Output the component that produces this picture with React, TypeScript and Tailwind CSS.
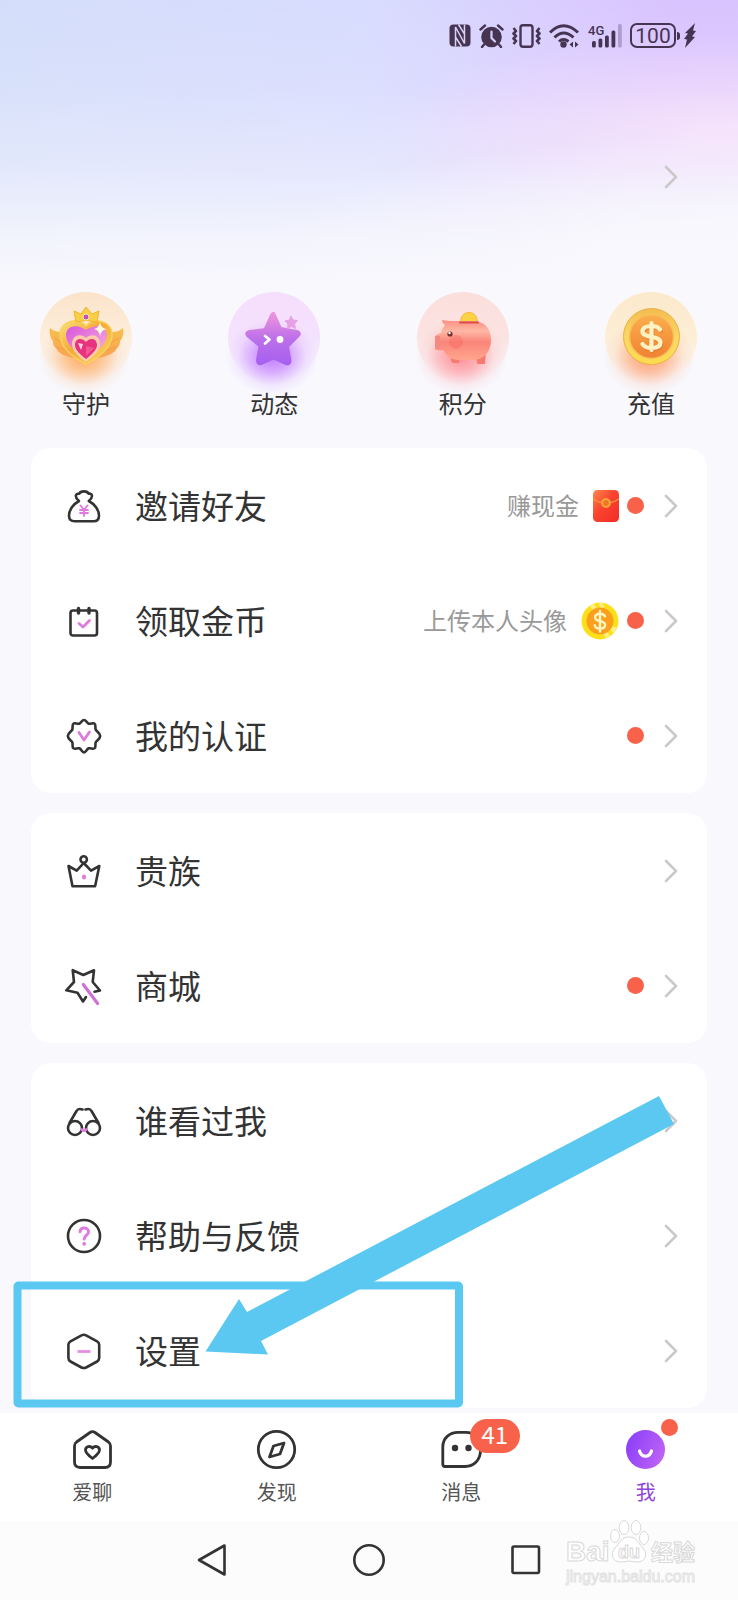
import type { ReactNode } from "react";

const DARK = "#333333";
const PINK = "#df7be0";

function Chevron() {
  return (
    <svg className="h-6 w-3.5 shrink-0" viewBox="0 0 14 24" fill="none" stroke="#c9c9cc" strokeWidth={2.6} strokeLinecap="round" strokeLinejoin="round">
      <path d="M2 2 12 12 2 22" />
    </svg>
  );
}

function LineIcon({ children }: { children: ReactNode }) {
  return (
    <svg className="h-[34px] w-[34px] shrink-0 overflow-visible" viewBox="0 0 34 34" fill="none" stroke={DARK} strokeWidth={2.6} strokeLinecap="round" strokeLinejoin="round">
      {children}
    </svg>
  );
}

const icons = {
  bag: (
    <LineIcon>
      <path d="M12 12C9.5 10 8.5 8 9 6.2c.5-1.6 2.2-1.6 3.2-1.4C12.8 3.3 15 2.4 17 2.4s4 .9 4.6 2.4c1-.2 2.9-.2 3.3 1.4.4 1.8-.6 3.8-3.1 5.800C27.500 15 32 21 32 26.5c0 4-2 5.800-5.500 5.800h-19C4 32.300 2 30.500 2 26.500 2 21 6.500 15 12 12z" />
      <path stroke={PINK} strokeWidth={1.9} d="m13.5 16.5 3.5 4.5 3.5-4.5M13 21h8M13 24h8M17 21v6" />
    </LineIcon>
  ),
  calendar: (
    <LineIcon>
      <rect x="3.5" y="6.5" width="26.5" height="25" rx="2.5" />
      <path strokeWidth={3.4} d="M11.5 4.5V9M22 4.5V9" />
      <path stroke={PINK} strokeWidth={2.8} d="m12 19.5 4 3.5 6.5-6.5" />
    </LineIcon>
  ),
  badge: (
    <LineIcon>
      <path d="M17 1c1.800 0 3 3 4.600 3.700S26.500 3.500 27.700 4.800c1.300 1.300.3 4.200 1 5.900C29.500 12.300 33.200 14 33.200 17s-3.700 4.700-4.500 6.300c-.7 1.700.3 4.600-1 5.900-1.200 1.300-4.500-.6-6.100.1S18.800 33.500 17 33.500s-3-3.500-4.600-4.200-4.900 1.200-6.100-.1c-1.300-1.300-.3-4.200-1-5.900C4.500 21.700.8 20 .8 17s3.700-4.700 4.500-6.300c.7-1.700-.3-4.600 1-5.900 1.200-1.300 4.500.6 6.100-.1S15.200 1 17 1z" />
      <path stroke={PINK} strokeWidth={2.8} d="m12 13.5 5 7.5 5.5-8" />
    </LineIcon>
  ),
  crown: (
    <LineIcon>
      <path d="m1.5 12 8.2 4.7L16.700 9 24 16.700l8.300-4.700-4.200 20.300H5.500z" />
      <circle cx="16.700" cy="5.500" r="3.200" fill="#fff" />
      <path stroke={PINK} strokeWidth={4} d="M17 22.500v1" />
    </LineIcon>
  ),
  wand: (
    <LineIcon>
      <path d="M27.500 22.700 33 21.500 25.700 13 27 1.200 16.300 6 5.700 1.200 7 13-.7 21.300l11.200 2.400L16 32.500l3-4.500" />
      <path stroke="#cf70d6" strokeWidth={3.2} d="m16.300 15.500 14.300 19" />
    </LineIcon>
  ),
  binoculars: (
    <LineIcon>
      <circle cx="8" cy="24" r="7" />
      <circle cx="26" cy="24" r="7" />
      <path d="M2.500 19 9.500 7c1-2 3-2.500 6-1.500M31.500 19 24.500 7c-1-2-3-2.500-6-1.500" />
      <path stroke={PINK} strokeWidth={2.8} d="M14.500 25.500q2.500 2 5 0" />
    </LineIcon>
  ),
  help: (
    <LineIcon>
      <circle cx="17" cy="17" r="16" />
      <path stroke={PINK} strokeWidth={3} d="M13 12.700c.3-2.300 2-3.700 4.200-3.700 2.300 0 4.300 1.500 4.300 3.900 0 3.600-4.300 3.200-4.300 7.100" />
      <circle cx="17.200" cy="24.800" r="1.900" fill={PINK} stroke="none" />
    </LineIcon>
  ),
  settings: (
    <LineIcon>
      <path d="M14.500 1.300q2.300-1.100 4.600 0l11 6q2.100 1.200 2.100 3.500v13q0 2.500-2.100 3.700l-11 6q-2.300 1.100-4.600 0l-11-6q-2.100-1.200-2.100-3.700v-13q0-2.300 2.100-3.500z" />
      <path stroke="#e58be0" strokeWidth={2.7} strokeLinecap="butt" d="M10.500 17.500h13" />
    </LineIcon>
  ),
};

function RedPacket() {
  return (
    <svg className="h-8 w-[26px] shrink-0" viewBox="0 0 26 32">
      <defs>
        <linearGradient id="packet" x1="0" y1="0" x2="1" y2="1">
          <stop offset="0" stopColor="#fb8a4e" />
          <stop offset=".45" stopColor="#f9432f" />
          <stop offset="1" stopColor="#f32c26" />
        </linearGradient>
      </defs>
      <rect width="26" height="32" rx="4.5" fill="url(#packet)" />
      <path d="M.5 9C5 12.500 9 13 13 13s8-.5 12.500-4" fill="none" stroke="#fa9a3c" strokeWidth="1.3" />
      <circle cx="13" cy="13" r="5" fill="#f9a03a" />
      <circle cx="13" cy="13" r="2.2" fill="#f57a28" stroke="#d9661a" strokeWidth=".8" />
    </svg>
  );
}

function GoldCoin() {
  return (
    <svg className="h-[38px] w-[38px] shrink-0" viewBox="0 0 38 38">
      <circle cx="19" cy="19" r="18.5" fill="#fde01a" />
      <path d="M9 3.500 13 2l3 5-4 2zM18 .6l4 .2 1 5-4 .3zM29 34l-4 2-3-5 4-2zM33 31l3-5-5-2-2 4z" fill="#fff3a0" opacity=".8" />
      <circle cx="19" cy="19" r="13.5" fill="#fba01c" />
      <path d="M24 14.500c-.8-2-2.600-2.800-5-2.800-2.800 0-4.900 1.300-4.900 3.700 0 5 10 2.300 10 7.400 0 2.500-2.200 3.800-5.100 3.800-2.700 0-4.800-1.100-5.300-3.300M19 9v20.500" fill="none" stroke="#fff7c4" strokeWidth="2.4" strokeLinecap="round" />
    </svg>
  );
}

const STAR = "M46 22 52.500 36.500 69 39.500Q73 41 70 44L59.500 54.500 62 68.500Q62 73 57.500 71.500L45.500 66 33.500 71.500Q29.500 72.500 29.500 68L32 54 19.500 43.500Q17.500 40.500 21.500 39.500L37 37.500 43 24Q45 20 46 22Z";
const DOLLAR = "M55 37.500c-2-3-5-3.500-8.500-3.500-5 0-9 2-9 5.500 0 7 18 3.500 18 11 0 4-4 5.500-9 5.500-4.500 0-7.500-1.500-9-4M46.500 31v27";

const quickLinks = [
  {
    label: "守护",
    top: "#fbe3c9",
    mid: "#fdeedd",
    glow: "#ffab5e",
    art: (
      <>
        <defs>
          <linearGradient id="gold" x1="0" y1="0" x2="1" y2="1">
            <stop offset="0" stopColor="#fbe27c" />
            <stop offset=".45" stopColor="#f5a938" />
            <stop offset="1" stopColor="#fbdc64" />
          </linearGradient>
          <linearGradient id="wing" x1="0" y1="0" x2="0" y2="1">
            <stop offset="0" stopColor="#f6c04f" />
            <stop offset="1" stopColor="#f8a252" />
          </linearGradient>
          <linearGradient id="rose" x1="0" y1="0" x2="1" y2="1">
            <stop offset="0" stopColor="#d854dc" />
            <stop offset="1" stopColor="#fbb4dc" />
          </linearGradient>
        </defs>
        <path d="M10 36C16 41 20 39 26 42L34 66C24 64 18 61 16 56 13 54 13 50 13 49 10 46 9 40 10 36ZM83 36C77 41 73 39 67 42L58 66C68 64 75 61 77 56 80 54 80 50 80 49 83 46 84 40 83 36Z" fill="url(#wing)" />
        <path d="M14 46l12 7M17 55l11 4M79 46l-12 7M76 55l-11 4" stroke="#f0933a" opacity=".6" />
        <path d="M46 72C34 66 20 57 20 42 20 30 37 24 46 34 55 24 72 30 72 42 72 57 58 66 46 72Z" fill="url(#gold)" stroke="#f8d25a" strokeWidth="1.5" />
        <path d="M46 65C36 60 26 53 26 43 26 34 37 31 46 38 55 31 67 34 67 43 67 53 56 60 46 65Z" fill="url(#rose)" />
        <path d="M46 70C38 64 32 59 32 52 32 43 41 41 46 46 51 41 60 43 60 52 60 59 54 64 46 70Z" fill="#fbcbab" />
        <path d="M46 67C40 62 35 58 35 53 35 46 42 45 46 50 50 45 57 46 57 53 57 58 52 62 46 67Z" fill="#e8317f" />
        <path d="m38 51 5 1-2 6z" fill="#fff" opacity=".8" />
        <path d="m46 54 8 2-8 8z" fill="#ff7fa6" opacity=".5" />
        <path d="M34 19 41 22 46 15 52 22 59 19 57 30Q46 27 36 30Z" fill="#f8cf45" stroke="#f2b52f" />
        <circle cx="46" cy="25" r="3" fill="#c94bc6" stroke="#fff0a0" />
        <path d="M60 30Q61 37 67 37 61 38 60 44 59 38 54 37 59 36 60 30Z" fill="#fffbe0" />
      </>
    ),
  },
  {
    label: "动态",
    top: "#f6defd",
    mid: "#f3e2fd",
    glow: "#c37cff",
    art: (
      <>
        <defs>
          <linearGradient id="star" x1="0" y1="0" x2="0" y2="1">
            <stop offset="0" stopColor="#ee94dc" />
            <stop offset=".5" stopColor="#bd70ea" />
            <stop offset="1" stopColor="#a660f0" />
          </linearGradient>
        </defs>
        <path d={STAR} fill="url(#star)" stroke="url(#star)" strokeWidth="3" strokeLinejoin="round" />
        <path d="m63 24 2 4 4.500.5-3 3.500 1 4.500-4-2-4 2 .5-4.500-3-3 4.500-1z" fill="#e7a0e6" stroke="#e7a0e6" strokeLinejoin="round" />
        <path d="m37 44 4.500 3.500-4.500 4" fill="none" stroke="#fff" strokeWidth="2.8" strokeLinecap="round" strokeLinejoin="round" />
        <circle cx="52" cy="47.5" r="3.4" fill="#fff" />
      </>
    ),
  },
  {
    label: "积分",
    top: "#fbdfdc",
    mid: "#fbe3e2",
    glow: "#ff8f96",
    art: (
      <>
        <defs>
          <linearGradient id="pig" x1="0" y1="0" x2="0" y2="1">
            <stop offset="0" stopColor="#fb8f82" />
            <stop offset=".28" stopColor="#ffb7a4" />
            <stop offset=".55" stopColor="#fa8579" />
            <stop offset="1" stopColor="#ffa68d" />
          </linearGradient>
        </defs>
        <path d="M33 62h10l-1 9h-6q-2 0-3-9ZM60 62l9-4-1 14h-7q-2 0-1-10Z" fill="#f8796f" />
        <path d="M44 31A8.300 8.300 0 1 1 60 31Z" fill="#fbd245" stroke="#f5b73c" />
        <path d="M25 28q5 1 9 1h22c12 0 18 8 18 19 0 13-8 20-19 20H42c-8 0-12-4-16-10-3 1-8 0-8-1V44q2-2 6-3 1-5 4-8-3-2-3-5Z" fill="url(#pig)" />
        <path d="M18 44q3 0 5 0v12q-4 1-5 0z" fill="#f58a84" />
        <circle cx="39" cy="50" r="7" fill="#f4615e" opacity=".35" />
        <circle cx="33" cy="42" r="2.6" fill="#7a2b2b" />
        <circle cx="32.5" cy="41" r="1.2" fill="#fff" />
        <path d="M43 30.500h18" stroke="#d94f49" strokeWidth="2" strokeLinecap="round" />
      </>
    ),
  },
  {
    label: "充值",
    top: "#fbe9cb",
    mid: "#fdeed6",
    glow: "#ff9d6c",
    art: (
      <>
        <defs>
          <linearGradient id="rim" x1="0" y1="0" x2="0" y2="1">
            <stop offset="0" stopColor="#f3bc4d" />
            <stop offset=".5" stopColor="#fbd766" />
            <stop offset="1" stopColor="#fbdc4d" />
          </linearGradient>
          <linearGradient id="face" x1="0" y1="0" x2="0" y2="1">
            <stop offset="0" stopColor="#fbae4e" />
            <stop offset="1" stopColor="#f08232" />
          </linearGradient>
        </defs>
        <circle cx="46.5" cy="44.5" r="28" fill="url(#rim)" stroke="#e9b24a" />
        <circle cx="46.5" cy="44.5" r="22" fill="url(#face)" stroke="#f9c05a" strokeWidth="1.5" />
        <path d={DOLLAR} fill="none" stroke="#d9722b" strokeWidth="4" strokeLinecap="round" transform="translate(1 1.5)" opacity=".5" />
        <path d={DOLLAR} fill="none" stroke="#fff2c2" strokeWidth="4.2" strokeLinecap="round" />
      </>
    ),
  },
];

type MenuItem = { icon: ReactNode; label: string; hint?: string; extra?: ReactNode; dot?: boolean };

const groups: MenuItem[][] = [
  [
    { icon: icons.bag, label: "邀请好友", hint: "赚现金", extra: <RedPacket />, dot: true },
    { icon: icons.calendar, label: "领取金币", hint: "上传本人头像", extra: <GoldCoin />, dot: true },
    { icon: icons.badge, label: "我的认证", dot: true },
  ],
  [
    { icon: icons.crown, label: "贵族" },
    { icon: icons.wand, label: "商城", dot: true },
  ],
  [
    { icon: icons.binoculars, label: "谁看过我" },
    { icon: icons.help, label: "帮助与反馈" },
    { icon: icons.settings, label: "设置" },
  ],
];

function MenuRow({ item }: { item: MenuItem }) {
  return (
    <button className="flex h-[115px] w-full items-center pl-9 pr-[29px] text-left">
      {item.icon}
      <span className="ml-[34px] flex-1 pb-0.5 text-[33px] leading-10 text-[#333333]">{item.label}</span>
      {item.hint && <span className="mr-3.5 pb-0.5 text-[24px] leading-8 text-[#999999]">{item.hint}</span>}
      {item.extra}
      {item.dot && <span className="ml-2 mr-5 h-[17px] w-[17px] rounded-full bg-[#f8624a]" />}
      <Chevron />
    </button>
  );
}

function StatusBar() {
  return (
    <div className="flex h-[70px] items-center justify-end gap-2 pr-[42px] pt-px text-[#453552]">
      <svg className="h-[23px] w-[22px]" viewBox="0 0 22 23">
        <rect x=".5" y=".5" width="21" height="22" rx="4" fill="currentColor" />
        <path d="M6.500 22.500V3L15.500 19.500V.5M9.500.5l6 9.500M6.500 13l6 9.500" fill="none" stroke="#d9d0f8" strokeWidth="1.5" />
      </svg>
      <svg className="h-6 w-[25px]" viewBox="0 0 25 24" fill="none" stroke="currentColor" strokeLinecap="round">
        <circle cx="12.5" cy="13" r="10.3" fill="currentColor" stroke="none" />
        <path strokeWidth="2.4" d="M1.500 5.500 6 1.500M23.500 5.500 19 1.500M5 20.500 3 23M20 20.500l2 2.500" />
        <path stroke="#d9d0f8" strokeWidth="2.2" d="M12.500 7.500V14l3.500 3.500" />
      </svg>
      <svg className="h-6 w-[29px]" viewBox="0 0 29 24" fill="none" stroke="currentColor" strokeLinejoin="round">
        <rect x="8.5" y="1.2" width="12" height="21.5" rx="2.5" strokeWidth="2.4" />
        <path strokeWidth="2.6" d="m1.500 4 2.500 3-2.500 2.500L4 12l-2.500 2.500L4 17l-2.500 3M27.500 4 25 7l2.500 2.500L25 12l2.500 2.500L25 17l2.500 3" />
      </svg>
      <svg className="h-6 w-[30px]" viewBox="0 0 30 24" fill="none" stroke="currentColor" strokeWidth="3">
        <path d="M1 8.500Q14.500-5 29 8.500M5.500 13.500Q14.500 4.500 24.500 13.500M10 17.500q4.500-4 9.500 0" />
        <circle cx="14.5" cy="20.5" r="3.2" fill="currentColor" stroke="none" />
        <path d="m20.500 20.500 3.500-3v6zM29.500 20.500l-3.500-3v6z" fill="currentColor" stroke="none" />
      </svg>
      <svg className="h-7 w-[35px]" viewBox="0 -2 35 28" fill="currentColor">
        <text x="1" y="11" fontFamily="Roboto, sans-serif" fontSize="13" fontWeight="500">4G</text>
        <rect x="5" y="17" width="3.8" height="6.5" rx="1.5" />
        <rect x="11.5" y="14.5" width="3.8" height="9" rx="1.5" />
        <rect x="18" y="11.5" width="3.8" height="12" rx="1.5" />
        <rect x="24.5" y="6.5" width="3.8" height="17" rx="1.5" />
        <rect x="31" y="0" width="3.8" height="23.5" rx="1.5" opacity=".3" />
      </svg>
      <div className="flex items-center">
        <span className="flex h-[25px] w-[46px] items-center justify-center rounded-[7px] border-2 border-current font-[Roboto,sans-serif] text-[21px] leading-6">100</span>
        <span className="ml-px h-2 w-[3px] rounded-r bg-current" />
        <svg className="ml-1 h-[25px] w-3" viewBox="0 0 12 25" fill="currentColor">
          <path d="M11 0 1 10 4 10.500 0 16l3 .5L1 25l10-11-3-.5L12 8 9 7.500z" />
        </svg>
      </div>
    </div>
  );
}

const tabIcon = "h-[39px] w-[39px] overflow-visible";

const tabs = [
  {
    label: "爱聊",
    icon: (
      <svg className={tabIcon} viewBox="0 0 39 39" fill="none" stroke={DARK} strokeWidth={2.8} strokeLinejoin="round">
        <path d="M17 2.500q2.500-1.800 5 0L35.500 12q2 1.500 2 4v16q0 5.500-5.500 5.500H7q-5.500 0-5.500-5.500V16q0-2.500 2-4z" />
        <path d="M19.500 28.500C15.500 25.500 12.500 23 12.500 20c0-3.500 4.500-4.800 7-1.800 2.500-3 7-1.700 7 1.800 0 3-3 5.500-7 8.500z" />
      </svg>
    ),
  },
  {
    label: "发现",
    icon: (
      <svg className={tabIcon} viewBox="0 0 39 39" fill="none" stroke={DARK} strokeWidth={2.8} strokeLinejoin="round">
        <circle cx="19.5" cy="19.5" r="18.2" />
        <path d="M27 13 16.500 16 12.500 27 23 24z" />
      </svg>
    ),
  },
  {
    label: "消息",
    badge: <span className="absolute -top-[11px] left-[28px] flex h-[34px] w-[50px] items-center justify-center rounded-full bg-[#f8624a] pb-1 text-[24px] leading-none text-white">41</span>,
    icon: (
      <svg className={tabIcon} viewBox="0 0 39 39" fill="none" stroke={DARK} strokeWidth={2.8} strokeLinejoin="round">
        <path d="M16 2.300h8c8 0 14.500 6 14.500 14v4C38.500 30 32 36.500 23 36.500H3q-2.200 0-2.200-2.200V17C.8 8.300 7.500 2.300 16 2.300z" />
        <circle cx="13" cy="18" r="3.2" fill={DARK} stroke="none" />
        <circle cx="26.5" cy="18" r="3.2" fill={DARK} stroke="none" />
      </svg>
    ),
  },
  {
    label: "我",
    active: true,
    badge: <span className="absolute -top-[11px] left-[35px] h-[17px] w-[17px] rounded-full bg-[#f8624a]" />,
    icon: (
      <svg className={tabIcon} viewBox="0 0 39 39" fill="none">
        <defs>
          <linearGradient id="me" x1="0" y1=".3" x2="1" y2=".7">
            <stop offset="0" stopColor="#8a40f8" />
            <stop offset="1" stopColor="#c063f6" />
          </linearGradient>
        </defs>
        <circle cx="19.5" cy="19.5" r="19.5" fill="url(#me)" />
        <path d="M13.500 21c2 7 10 7 12 0" stroke="#fff" strokeWidth="3.2" strokeLinecap="round" />
      </svg>
    ),
  },
];

function Watermark() {
  return (
    <svg className="absolute right-[38px] -top-[2px] h-[68px] w-[136px]" viewBox="0 0 136 68" fill="#fff" stroke="#d9d9d9" strokeWidth="1" fontFamily='"Liberation Sans", "Noto Sans CJK SC", sans-serif'>
      <text x="2" y="42" fontSize="28" fontWeight="700">Bai</text>
      <ellipse cx="51" cy="17" rx="4.5" ry="6.5" />
      <ellipse cx="60" cy="8.5" rx="4.8" ry="7" />
      <ellipse cx="72" cy="8.5" rx="4.8" ry="7" />
      <ellipse cx="80" cy="19" rx="4.5" ry="6.5" />
      <path d="M65 18c8 0 9 6 14 11 5 6 3 14-6 14-3 0-5-1-8-1s-5 1-8 1c-9 0-11-8-6-14 5-5 6-11 14-11z" />
      <text x="54" y="39" fontSize="18" fontWeight="700">du</text>
      <text x="87" y="41" fontSize="22" fontWeight="700">经验</text>
      <text x="2" y="63" fontSize="16" stroke="#e2e2e2">jingyan.baidu.com</text>
    </svg>
  );
}

export default function App() {
  return (
    <div className="flex min-h-screen flex-col bg-[#f8f8fd] font-['Noto_Sans_CJK_SC',sans-serif]">
      <header className="bg-[linear-gradient(to_bottom,rgba(248,248,253,0)_0px,rgba(248,248,253,0.12)_90px,rgba(248,248,253,0.42)_170px,rgba(248,248,253,0.85)_240px,#f8f8fd_284px),radial-gradient(ellipse_65%_42%_at_100%_90%,#f6f4fc_30%,rgba(246,244,252,0)_100%),radial-gradient(ellipse_50%_36%_at_100%_48%,#f4dbfa_10%,rgba(244,219,250,0)_100%),linear-gradient(to_right,#d4defa_0%,#d8dcfe_50%,#dac4ff_90%)]">
        <StatusBar />
        <button aria-label="个人主页" className="flex h-[214px] w-full items-center justify-end pr-[60px]">
          <Chevron />
        </button>
      </header>

      <nav className="flex justify-between pl-10 pr-[41px] pt-2">
        {quickLinks.map((q, i) => (
          <a key={q.label} href="#" className="flex flex-col items-center">
            <svg className="h-[92px] w-[92px] overflow-visible" viewBox="0 0 92 92">
              <defs>
                <linearGradient id={`disc${i}`} x1="0" y1="0" x2="0" y2="1">
                  <stop offset="0" stopColor={q.top} />
                  <stop offset=".5" stopColor={q.mid} />
                  <stop offset=".95" stopColor={q.mid} stopOpacity="0" />
                </linearGradient>
                <radialGradient id={`glow${i}`}>
                  <stop offset="0" stopColor={q.glow} />
                  <stop offset=".4" stopColor={q.glow} stopOpacity=".6" />
                  <stop offset=".75" stopColor={q.glow} stopOpacity=".13" />
                  <stop offset="1" stopColor={q.glow} stopOpacity="0" />
                </radialGradient>
              </defs>
              <circle cx="46" cy="46" r="46" fill={`url(#disc${i})`} />
              <ellipse cx="44" cy="65" rx="46" ry="38" fill={`url(#glow${i})`} />
              {q.art}
            </svg>
            <span className="mt-1 text-[24px] leading-[30px] text-[#333333]">{q.label}</span>
          </a>
        ))}
      </nav>

      <main className="relative mt-[30px] flex flex-1 flex-col gap-5 px-[31px] pb-[5px]">
        {groups.map((group, i) => (
          <section key={i} className="rounded-[20px] bg-white">
            {group.map((item) => <MenuRow key={item.label} item={item} />)}
          </section>
        ))}
        {/* pointer to the settings row */}
        <svg className="pointer-events-none absolute bottom-[5px] left-[13px] h-[314px] w-[664px]" viewBox="0 0 664 314">
          <rect x="4.5" y="191.5" width="441.5" height="118" rx="1" fill="none" stroke="#5bc8f2" strokeWidth="8" strokeLinejoin="round" />
          <path d="M192.500 257.500 226 205 234 218 646 2 661 30 248 247 255 260.500Z" fill="#5bc8f2" />
        </svg>
      </main>

      <nav className="grid h-[108px] grid-cols-4 bg-white">
        {tabs.map((t) => (
          <a key={t.label} href="#" className="flex flex-col items-center pt-[17px]">
            <span className="relative">
              {t.icon}
              {t.badge}
            </span>
            <span className={`mt-2 text-[20px] leading-[30px] ${t.active ? "text-[#8f45d8]" : "text-[#555555]"}`}>{t.label}</span>
          </a>
        ))}
      </nav>

      <footer className="relative flex h-[79px] items-center justify-center gap-[123px] bg-[#fcfcfc] pb-0.5">
        <button aria-label="返回">
          <svg className="h-[34px] w-[34px]" viewBox="0 0 34 34" fill="none" stroke={DARK} strokeWidth={2.6} strokeLinejoin="round">
            <path d="M29.500 2.500v29L4 17z" />
          </svg>
        </button>
        <button aria-label="主屏幕">
          <svg className="h-[34px] w-[34px]" viewBox="0 0 34 34" fill="none" stroke={DARK} strokeWidth={2.6}>
            <circle cx="17" cy="17" r="14.7" />
          </svg>
        </button>
        <button aria-label="最近任务">
          <svg className="h-[34px] w-[34px]" viewBox="0 0 34 34" fill="none" stroke={DARK} strokeWidth={2.6}>
            <rect x="3.5" y="3.5" width="26.5" height="26.5" rx="1.5" />
          </svg>
        </button>
        <Watermark />
      </footer>
    </div>
  );
}
